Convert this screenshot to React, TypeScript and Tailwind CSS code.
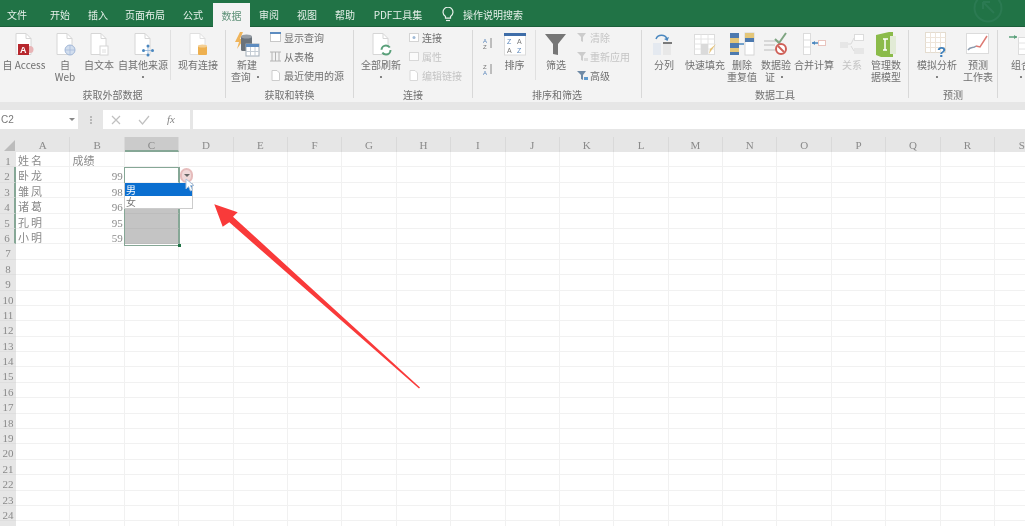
import React from 'react';

const tabs = [
  { label: '文件', w: 'w-[34px]' },
  { label: '开始', w: 'w-[52px]' },
  { label: '插入', w: 'w-[24px]' },
  { label: '页面布局', w: 'w-[70px]' },
  { label: '公式', w: 'w-[26px] mr-[7px]' },
  { label: '数据', w: 'w-[37px]', active: true },
  { label: '审阅', w: 'w-[38px]' },
  { label: '视图', w: 'w-[38px]' },
  { label: '帮助', w: 'w-[38px]' },
  { label: 'PDF工具集', w: 'w-[68px]' },
];

const columns = 'ABCDEFGHIJKLMNOPQRS'.split('');
const people = [
  ['姓名', '成绩'],
  ['卧龙', '99'],
  ['雏凤', '98'],
  ['诸葛', '96'],
  ['孔明', '95'],
  ['小明', '59'],
];
const rowNumbers = Array.from({ length: 25 }, (_, i) => i + 1);

// Shared sheet of paper most of the ribbon icons sit on
const Doc = ({ children, stroke = '#d6d6d6' }: { children?: React.ReactNode; stroke?: string }) => (
  <svg width="26" height="26" viewBox="0 0 26 26" fill="none">
    <path d="M5 2.500h10l5 5v16H5z" fill="#fff" stroke={stroke} />
    <path d="M15 2.500v5h5" stroke={stroke} />
    {children}
  </svg>
);

const Small = ({ children }: { children: React.ReactNode }) => (
  <svg width="13" height="13" viewBox="0 0 13 13" fill="none">{children}</svg>
);

const icons: Record<string, React.ReactNode> = {
  access: (
    <Doc>
      <circle cx="19" cy="18.500" r="3.500" fill="#e8b4b6" />
      <rect x="7" y="13" width="11" height="11" fill="#b7272d" />
      <text x="9" y="22" fontSize="9" fontWeight="700" fill="#fff" fontFamily="Liberation Sans">A</text>
    </Doc>
  ),
  web: (
    <Doc>
      <circle cx="18" cy="19" r="5" fill="#d2deee" stroke="#a3b8d8" />
      <path d="M18 14v10M13 19h10" stroke="#a3b8d8" strokeWidth=".7" />
    </Doc>
  ),
  text: (
    <Doc>
      <rect x="14" y="15" width="8" height="9" fill="#fff" stroke="#d6d6d6" />
      <path d="M16 19h4M16 21h4" stroke="#dedede" />
    </Doc>
  ),
  other: (
    <Doc>
      <path d="M18 16v7M14.500 19.500h7" stroke="#a3c0df" />
      <circle cx="18" cy="15" r="1.500" fill="#4a87bf" />
      <circle cx="18" cy="24" r="1.500" fill="#4a87bf" />
      <circle cx="13.500" cy="19.500" r="1.500" fill="#4a87bf" />
      <circle cx="22.500" cy="19.500" r="1.500" fill="#4a87bf" />
    </Doc>
  ),
  existing: (
    <Doc stroke="#e0e0e0">
      <rect x="13" y="15" width="9" height="9" rx="1" fill="#eeb04f" />
      <ellipse cx="17.500" cy="15" rx="4.500" ry="1.500" fill="#f4cf93" />
    </Doc>
  ),
  query: (
    <svg width="26" height="26" viewBox="0 0 26 26" fill="none">
      <path d="M6 1 1 11h4l-2 7 7-10H6l3-7z" fill="#efb45a" />
      <rect x="7" y="5" width="11" height="15" rx="1.500" fill="#6a727a" />
      <ellipse cx="12.500" cy="5.500" rx="5.500" ry="2" fill="#979ea5" />
      <rect x="12" y="13" width="13" height="12" fill="#fff" stroke="#a2adb8" />
      <rect x="12" y="13" width="13" height="3" fill="#5d8cc0" />
      <path d="M16.500 16v9M21 16v9M12 20.500h13" stroke="#c4ccd4" />
    </svg>
  ),
  refresh: (
    <Doc>
      <circle cx="18" cy="19" r="4.500" fill="#fff" stroke="#5aa07a" strokeWidth="2" strokeDasharray="11 3" />
    </Doc>
  ),
  sort: (
    <svg width="26" height="26" viewBox="0 0 26 26" fill="none">
      <rect x="2.500" y="3" width="21" height="21" fill="#fff" stroke="#dcdcdc" />
      <rect x="2" y="2" width="22" height="3" fill="#3f6da8" />
      <text x="5" y="13" fontSize="7" fill="#5a86ba" fontFamily="Liberation Sans">Z</text>
      <text x="15" y="13" fontSize="7" fill="#777" fontFamily="Liberation Sans">A</text>
      <text x="5" y="22" fontSize="7" fill="#777" fontFamily="Liberation Sans">A</text>
      <text x="15" y="22" fontSize="7" fill="#5a86ba" fontFamily="Liberation Sans">Z</text>
    </svg>
  ),
  filter: (
    <svg width="26" height="26" viewBox="0 0 26 26" fill="none">
      <path d="M2 3h21l-8 10v11l-5-1V13z" fill="#767676" />
    </svg>
  ),
  split: (
    <svg width="26" height="26" viewBox="0 0 26 26" fill="none">
      <rect x="2" y="12" width="8" height="12" fill="#e4e9f0" />
      <rect x="12" y="12" width="8" height="12" fill="#e8e8e8" />
      <rect x="12" y="11" width="9" height="2" fill="#7a7a7a" />
      <path d="M5 8c2-5 9-5 11 0" stroke="#4a87bf" strokeWidth="1.500" />
      <path d="m13 8 3.500 2L18 6z" fill="#4a87bf" />
    </svg>
  ),
  flash: (
    <svg width="26" height="26" viewBox="0 0 26 26" fill="none">
      <rect x="2.500" y="3.500" width="20" height="20" fill="#fff" stroke="#dcdcdc" />
      <path d="M2.500 8h20M2.500 13h20M2.500 18h20M9 3.500v20M16 3.500v20" stroke="#e4e4e4" />
      <rect x="9" y="13" width="7" height="10" fill="#dadada" />
      <path d="m24 13-5 7-2 3 1-5z" fill="#e7c47a" />
    </svg>
  ),
  dedupe: (
    <svg width="26" height="26" viewBox="0 0 26 26" fill="none">
      <rect x="1" y="2" width="9" height="22" fill="#4d7aaf" />
      <rect x="1" y="7" width="9" height="5" fill="#e3c679" />
      <rect x="1" y="17" width="9" height="4" fill="#e3c679" />
      <rect x="16" y="2" width="9" height="22" fill="#fff" stroke="#d6d6d6" />
      <rect x="16" y="2" width="9" height="5" fill="#e3c679" />
      <rect x="16" y="7" width="9" height="4" fill="#4d7aaf" />
      <path d="M10 13h5" stroke="#4a87bf" strokeWidth="1.500" />
    </svg>
  ),
  validate: (
    <svg width="26" height="26" viewBox="0 0 26 26" fill="none">
      <path d="M1 10h15M1 14h11M1 19h11" stroke="#d8d8d8" strokeWidth="2" />
      <path d="m12 8 4 4 7-10" stroke="#7fa582" strokeWidth="2" />
      <circle cx="18" cy="18" r="5" fill="#fff" stroke="#cf6058" strokeWidth="2" />
      <path d="m15 15 6 6" stroke="#cf6058" strokeWidth="2" />
    </svg>
  ),
  consolidate: (
    <svg width="26" height="26" viewBox="0 0 26 26" fill="none">
      <rect x="2.500" y="2.500" width="7" height="21" fill="#fff" stroke="#dcdcdc" />
      <path d="M2.500 9h7M2.500 16h7" stroke="#dcdcdc" />
      <path d="M11 12h6" stroke="#4a87bf" strokeWidth="1.500" />
      <path d="m11 12 3-2v4z" fill="#4a87bf" />
      <rect x="17.500" y="9.500" width="7" height="5" fill="#fff" stroke="#e8c4be" />
    </svg>
  ),
  relation: (
    <svg width="26" height="26" viewBox="0 0 26 26" fill="none">
      <rect x="1" y="11" width="8" height="6" fill="#e6e6e6" />
      <rect x="15.500" y="3.500" width="9" height="6" fill="#fff" stroke="#dcdcdc" />
      <rect x="15" y="17" width="10" height="6" fill="#e6e6e6" />
      <path d="M9 13h3l3-6M12 15l3 5" stroke="#dadada" />
    </svg>
  ),
  model: (
    <svg width="26" height="26" viewBox="0 0 26 26" fill="none">
      <path d="M3 4 16 1h4v25H8l-5-2z" fill="#8bbb4a" />
      <rect x="17" y="5" width="6" height="18" fill="#e2ebd6" />
      <path d="M10 8h5M12 8v11M10 19h4" stroke="#fff" strokeWidth="1.500" />
    </svg>
  ),
  whatif: (
    <svg width="26" height="26" viewBox="0 0 26 26" fill="none">
      <rect x="1.500" y="1.500" width="20" height="20" fill="#fff" stroke="#e4dccf" />
      <path d="M1.500 6.500h20M1.500 11.500h20M1.500 16.500h20M6.500 1.500v20M11.500 1.500v20M16.500 1.500v20" stroke="#eee5da" />
      <text x="13" y="26" fontSize="15" fontWeight="700" fill="#3f80bb" fontFamily="Liberation Sans">?</text>
    </svg>
  ),
  forecast: (
    <svg width="26" height="26" viewBox="0 0 26 26" fill="none">
      <rect x="1.500" y="2.500" width="22" height="20" fill="#fff" stroke="#dcdcdc" />
      <path d="M3 19c3-4 5-1 8-4" stroke="#8a9aad" strokeWidth="1.500" />
      <path d="m11 15 4 1 7-11" stroke="#dd7a73" strokeWidth="1.500" />
    </svg>
  ),
  group: (
    <svg width="26" height="26" viewBox="0 0 26 26" fill="none">
      <path d="M1 6h8" stroke="#5aa07a" strokeWidth="1.500" />
      <path d="m9 6-3-2v4z" fill="#5aa07a" />
      <rect x="10.500" y="6.500" width="14" height="17" fill="#fff" stroke="#dcdcdc" />
      <path d="M10.500 12h14M10.500 18h14" stroke="#e4e4e4" />
    </svg>
  ),
};

const Big = ({
  icon,
  lines,
  w,
  faded,
}: {
  icon: string;
  lines: string[];
  w: string;
  faded?: boolean;
}) => (
  <div className={`flex flex-col items-center shrink-0 pt-px ${w} ${faded ? 'text-[#c4c4c4]' : ''}`}>
    <div className="h-[28px] flex items-start justify-center">{icons[icon]}</div>
    {lines.map((l) => (
      <div key={l} className="h-[12px] leading-[12px] whitespace-nowrap text-center">{l}</div>
    ))}
  </div>
);

const SmallRow = ({
  icon,
  label,
  faded,
  gap = 'gap-[2px]',
}: {
  icon: React.ReactNode;
  label: string;
  faded?: boolean;
  gap?: string;
}) => (
  <div className={`h-[19px] flex items-center whitespace-nowrap ${gap} ${faded ? 'text-[#c4c4c4]' : ''}`}>
    <Small>{icon}</Small>
    <span>{label}</span>
  </div>
);

const Group = ({ label, w, children }: { label: string; w: string; children: React.ReactNode }) => (
  <div className={`h-[68px] shrink-0 border-r border-[#d8d8d8] flex flex-col ${w}`}>
    <div className="h-[58px] shrink-0 flex">{children}</div>
    <div className="h-[13px] shrink-0 leading-[13px] text-center">{label}</div>
  </div>
);

const Funnel = ({ color, accent }: { color: string; accent?: string }) => (
  <>
    <path d="M1 2h9L7 6v5L5 10V6z" fill={color} />
    {accent && <path d="M8 8h4v3H8z" fill={accent} />}
  </>
);

const App: React.FC = () => {
  return (
    <div className="relative w-[1025px] h-[526px] overflow-hidden bg-white blur-[0.5px] text-[10px] text-[#707070] font-['Noto_Sans_CJK_SC',sans-serif]">
      {/* Tab bar */}
      <div className="h-[27px] bg-[#217346] border-b border-[#1b5f3a] flex items-end text-[#e6f0ea]">
        {tabs.map((t) => (
          <div
            key={t.label}
            className={`h-[23px] flex items-center justify-center shrink-0 whitespace-nowrap ${t.w} ${
              t.active ? 'bg-[#f3f3f3] text-[#5d9077] h-[24px] -mb-px' : ''
            }`}
          >
            {t.label}
          </div>
        ))}
        <div className="h-[23px] flex items-center ml-[10px] gap-[9px]">
          <svg width="12" height="15" viewBox="0 0 12 15" fill="none" stroke="#e6f0ea" strokeWidth="1.200">
            <path d="M3.500 9.500C2 8.300 1 7 1 5.200a5 5 0 0 1 10 0c0 1.800-1 3.100-2.500 4.300v1.700h-5z" />
            <path d="M4 13.500h4" />
          </svg>
          <span>操作说明搜索</span>
        </div>
      </div>

      {/* Faint cursor-ring watermark in the top right corner */}
      <svg className="absolute left-[971px] top-[-9px]" width="34" height="34" viewBox="0 0 34 34" fill="none" stroke="#2b7a52" strokeWidth="2">
        <circle cx="17" cy="17" r="13.500" />
        <path d="M12 11h7M12 11v7M12 11l11 11" />
      </svg>

      {/* Ribbon */}
      <div className="h-[75px] bg-[#f3f3f3] pt-[3px] flex">
        <Group label="获取外部数据" w="w-[226px]">
          <Big icon="access" lines={['自 Access']} w="w-[48px]" />
          <Big icon="web" lines={['自', 'Web']} w="w-[34px]" />
          <Big icon="text" lines={['自文本']} w="w-[34px]" />
          <Big icon="other" lines={['自其他来源', '·']} w="w-[54px]" />
          <div className="w-px h-[50px] bg-[#e0e0e0] mr-[2px] shrink-0" />
          <Big icon="existing" lines={['现有连接']} w="w-[50px]" />
        </Group>
        <Group label="获取和转换" w="w-[128px]">
          <Big icon="query" lines={['新建', '查询 ·']} w="w-[42px]" />
          <div className="pl-px -mt-[2px]">
            <SmallRow
              label="显示查询"
              icon={
                <>
                  <rect x="1.500" y="2.500" width="10" height="8" fill="#fff" stroke="#c8c8c8" />
                  <rect x="1" y="1" width="11" height="2" fill="#5d8cc0" />
                </>
              }
            />
            <SmallRow
              label="从表格"
              icon={<path d="M1 2h11M1 11h11M3 2v9M6.500 2v9M10 2v9" stroke="#b4b4b4" />}
            />
            <SmallRow
              label="最近使用的源"
              icon={<path d="M3 1.500h5l2.500 2.500v7.500H3z" fill="#fff" stroke="#cccccc" />}
            />
          </div>
        </Group>
        <Group label="连接" w="w-[119px]">
          <Big icon="refresh" lines={['全部刷新', '·']} w="w-[54px]" />
          <div className="-mt-[2px]">
            <SmallRow
              label="连接"
              gap="gap-px"
              icon={
                <>
                  <rect x="1.500" y="2.500" width="9" height="8" fill="#fff" stroke="#d4d4d4" />
                  <circle cx="6" cy="6.500" r="1.500" fill="#a0bad6" />
                </>
              }
            />
            <SmallRow
              label="属性"
              faded
              gap="gap-px"
              icon={<rect x="1.500" y="2.500" width="9" height="8" fill="#fbfbfb" stroke="#d8d8d8" />}
            />
            <SmallRow
              label="编辑链接"
              faded
              gap="gap-px"
              icon={<path d="M2 1.500h5l2.500 2.500v7.500H2z" fill="#fff" stroke="#d8d8d8" />}
            />
          </div>
        </Group>
        <Group label="排序和筛选" w="w-[169px]">
          <div className="w-[28px] pl-[10px] pt-[7px] shrink-0 flex flex-col gap-[13px]">
            <svg width="12" height="13" viewBox="0 0 12 13" fill="none">
              <text x="0" y="6" fontSize="6" fill="#5a86ba" fontFamily="Liberation Sans">A</text>
              <text x="0" y="12" fontSize="6" fill="#777" fontFamily="Liberation Sans">Z</text>
              <path d="M8 1v10" stroke="#888" />
            </svg>
            <svg width="12" height="13" viewBox="0 0 12 13" fill="none">
              <text x="0" y="6" fontSize="6" fill="#777" fontFamily="Liberation Sans">Z</text>
              <text x="0" y="12" fontSize="6" fill="#5a86ba" fontFamily="Liberation Sans">A</text>
              <path d="M8 1v10" stroke="#888" />
            </svg>
          </div>
          <Big icon="sort" lines={['排序']} w="w-[27px]" />
          <div className="w-px h-[50px] bg-[#e0e0e0] mx-[7px] shrink-0" />
          <Big icon="filter" lines={['筛选']} w="w-[26px]" />
          <div className="pl-[7px] -mt-[2px]">
            <SmallRow label="清除" faded gap="gap-px" icon={<Funnel color="#cccccc" />} />
            <SmallRow label="重新应用" faded gap="gap-px" icon={<Funnel color="#cccccc" accent="#dcdcdc" />} />
            <SmallRow label="高级" gap="gap-px" icon={<Funnel color="#6f8aa6" accent="#5f9bcf" />} />
          </div>
        </Group>
        <Group label="数据工具" w="w-[267px]">
          <Big icon="split" lines={['分列']} w="w-[44px]" />
          <Big icon="flash" lines={['快速填充']} w="w-[38px]" />
          <Big icon="dedupe" lines={['删除', '重复值']} w="w-[36px]" />
          <Big icon="validate" lines={['数据验', '证 ·']} w="w-[32px]" />
          <Big icon="consolidate" lines={['合并计算']} w="w-[44px]" />
          <Big icon="relation" lines={['关系']} w="w-[32px]" faded />
          <Big icon="model" lines={['管理数', '据模型']} w="w-[36px]" />
        </Group>
        <Group label="预测" w="w-[89px]">
          <div className="w-[4px] shrink-0" />
          <Big icon="whatif" lines={['模拟分析', '·']} w="w-[48px]" />
          <Big icon="forecast" lines={['预测', '工作表']} w="w-[34px]" />
        </Group>
        <div className="pl-[8px] shrink-0">
          <Big icon="group" lines={['组合', '·']} w="w-[30px]" />
        </div>
      </div>

      {/* Formula bar */}
      <div className="h-[35px] bg-[#e6e6e6] pt-[8px]">
        <div className="h-[19px] flex">
          <div className="w-[78px] bg-white flex items-center justify-between pl-px pr-[3px] text-[#777]">
            <span className="font-['Liberation_Sans',sans-serif]">C2</span>
            <span className="w-0 h-0 border-x-[3px] border-x-transparent border-t-[3px] border-t-[#888]" />
          </div>
          <div className="w-[25px] flex flex-col items-center justify-center gap-px">
            <span className="w-[2px] h-[2px] bg-[#b8b8b8]" />
            <span className="w-[2px] h-[2px] bg-[#b8b8b8]" />
            <span className="w-[2px] h-[2px] bg-[#b8b8b8]" />
          </div>
          <div className="w-[87px] bg-white flex items-center pl-[8px] gap-[17px] font-['Liberation_Serif',serif]">
            <svg width="10" height="10" viewBox="0 0 10 10" stroke="#c0c0c0" strokeWidth="1.200"><path d="m1 1 8 8M9 1 1 9" /></svg>
            <svg width="12" height="10" viewBox="0 0 12 10" fill="none" stroke="#c0c0c0" strokeWidth="1.200"><path d="m1 5 3.500 4L11 1" /></svg>
            <span className="italic text-[11px] text-[#888]">fx</span>
          </div>
          <div className="flex-1 ml-[3px] bg-white" />
        </div>
      </div>

      {/* Sheet */}
      <div className="font-['Liberation_Serif','Noto_Sans_CJK_SC',serif] text-[11px] text-[#8a8a8a]">
        <div className="flex h-[15px] bg-[#e6e6e6]">
          <div className="w-[16px] shrink-0 relative">
            <div className="absolute right-px bottom-px w-0 h-0 border-l-[11px] border-l-transparent border-b-[11px] border-b-[#bcbcbc]" />
          </div>
          {columns.map((c) => (
            <div
              key={c}
              className={`w-[54.4px] shrink-0 text-center leading-[16px] border-r border-[#d9d9d9] ${
                c === 'C' ? 'bg-[#cbcbcb] border-b-2 border-b-[#86a796]' : ''
              }`}
            >
              {c}
            </div>
          ))}
        </div>
        {rowNumbers.map((n) => {
          const row = people[n - 1];
          const selected = n >= 2 && n <= 6;
          return (
            <div key={n} className="flex h-[15.4px]">
              <div
                className={`w-[16px] shrink-0 text-center leading-[18px] overflow-hidden bg-[#e6e6e6] border-b border-[#dedede] ${
                  selected ? 'bg-[#d6d6d6] border-r-2 border-r-[#86a796]' : ''
                }`}
              >
                {n < 25 ? n : ''}
              </div>
              {columns.map((c, i) => (
                <div
                  key={c}
                  className={`w-[54.4px] shrink-0 border-r border-b border-[#f1f1f1] leading-[18px] px-[2px] overflow-hidden whitespace-nowrap ${
                    i === 1 && n > 1 ? 'text-right pr-px' : ''
                  } ${i === 0 ? 'tracking-[2px]' : ''} ${
                    i === 2 && n > 2 && n <= 6 ? 'bg-[#c4c4c4] border-b-[#bcbcbc] border-r-[#86a796]' : ''
                  } ${i === 2 && n === 2 ? 'border-r-[#86a796]' : ''}`}
                >
                  {row && i < 2 ? row[i] : ''}
                </div>
              ))}
            </div>
          );
        })}
      </div>

      {/* Selection outline, dropdown list and cursor lie over the sheet */}
      <div className="absolute left-[124px] top-[167px] w-[56px] h-[79px] border border-[#86a796]" />
      <div className="absolute left-[178px] top-[244px] w-[3px] h-[3px] bg-[#217346]" />
      <div className="absolute left-[180px] top-[168px] w-[13px] h-[15px] rounded-full bg-[#efd9d9] border-2 border-[#e6bcbc] flex items-center justify-center">
        <span className="w-0 h-0 border-x-[3px] border-x-transparent border-t-[3px] border-t-[#666]" />
      </div>
      <div className="absolute left-[124px] top-[183px] w-[69px] h-[26px] bg-white border border-[#cccccc] border-t-0 text-[10px]">
        <div className="h-[13px] bg-[#0b6fd0] text-white leading-[13px] pl-px">男</div>
        <div className="h-[12px] leading-[12px] pl-px text-[#777]">女</div>
      </div>
      <svg className="absolute left-[185px] top-[178px]" width="10" height="14" viewBox="0 0 10 14">
        <path d="M1 1v10l2.500-2.500L5.500 13l2-1-2-4.500H9z" fill="#fff" stroke="#a8c0da" />
      </svg>

      {/* Red annotation arrow */}
      <svg className="absolute left-0 top-0 pointer-events-none" width="1025" height="526" viewBox="0 0 1025 526">
        <path d="M214.300 204.300 237.700 212.300 233 216.700 420 387.600 419 388.600 229.300 222.300 222.700 226.700z" fill="#f93a3a" />
      </svg>
    </div>
  );
};

export default App;
